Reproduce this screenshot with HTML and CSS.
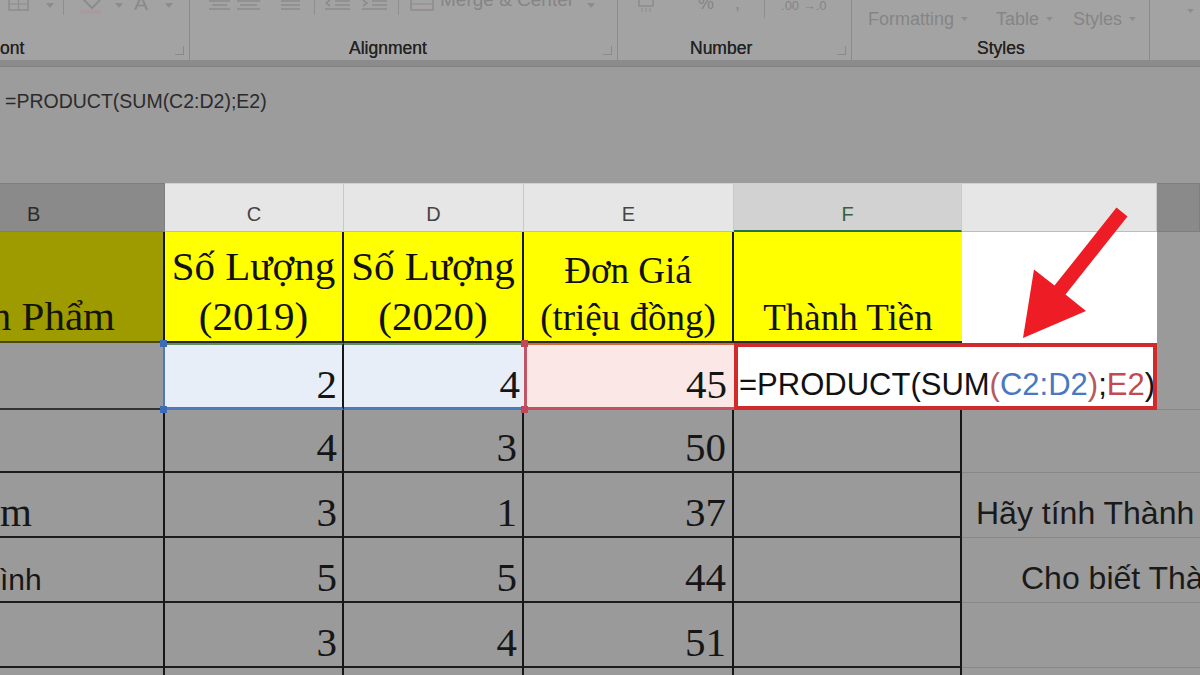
FILE: index.html
```html
<!DOCTYPE html>
<html lang="vi">
<head>
<meta charset="utf-8">
<title>Excel PRODUCT</title>
<link rel="stylesheet" href="styles.css">
</head>
<body>
<div class="ribbon">
  <div class="grp g1">
    <div class="tools">
      <svg class="ico ml8" width="21" height="12" viewBox="0 0 21 12"><rect x="1" y="-4" width="19" height="14" fill="none" stroke="#8c8c8c" stroke-width="1.5"/><line x1="10.5" y1="-4" x2="10.5" y2="10" stroke="#8c8c8c"/><line x1="1" y1="4" x2="20" y2="4" stroke="#8c8c8c"/></svg>
      <svg class="caret ml17" width="8" height="5" viewBox="0 0 8 5"><polygon points="0,0 8,0 4,5" fill="#8c8c8c"/></svg>
      <span class="vsep ml9"></span>
      <svg class="ico ml14" width="25" height="14" viewBox="0 0 25 14"><path d="M4 -2 L14 8 L22 0" fill="none" stroke="#8c8c8c" stroke-width="2"/><rect x="2" y="10" width="21" height="4" fill="#a89aa0"/></svg>
      <svg class="caret ml12" width="8" height="5" viewBox="0 0 8 5"><polygon points="0,0 8,0 4,5" fill="#8c8c8c"/></svg>
      <span class="glyphA ml11">A</span>
      <svg class="caret ml17" width="8" height="5" viewBox="0 0 8 5"><polygon points="0,0 8,0 4,5" fill="#8c8c8c"/></svg>
    </div>
    <div class="foot"><span class="label">ont</span><span class="launch"></span></div>
  </div>
  <div class="grp g2">
    <div class="tools">
      <svg class="ico ml19" width="21" height="12" viewBox="0 0 21 12"><path d="M0 1H21M3 5H18M0 9H21" stroke="#8c8c8c" stroke-width="1.6"/></svg>
      <svg class="ico ml7" width="23" height="12" viewBox="0 0 23 12"><path d="M0 1H23M3 5H20M0 9H23" stroke="#8c8c8c" stroke-width="1.6"/></svg>
      <svg class="ico ml21" width="19" height="12" viewBox="0 0 19 12"><path d="M0 1H19M0 5H19M0 9H19" stroke="#8c8c8c" stroke-width="1.6"/></svg>
      <span class="vsep ml14"></span>
      <svg class="ico ml10" width="25" height="12" viewBox="0 0 25 12"><path d="M10 1H25M10 5H25M0 9H25M5 0L1 3L5 6" fill="none" stroke="#8c8c8c" stroke-width="1.6"/></svg>
      <svg class="ico ml12" width="25" height="12" viewBox="0 0 25 12"><path d="M10 1H25M10 5H25M0 9H25M1 0L5 3L1 6" fill="none" stroke="#8c8c8c" stroke-width="1.6"/></svg>
      <span class="vsep ml11"></span>
      <svg class="ico ml11" width="24" height="12" viewBox="0 0 24 12"><rect x="1" y="-3" width="22" height="13" fill="none" stroke="#8c8c8c" stroke-width="1.5"/><line x1="1" y1="4" x2="23" y2="4" stroke="#8c8c8c"/><rect x="3" y="5" width="18" height="3" fill="#b0a0a6"/></svg>
      <span class="rtxt up ml6">Merge &amp; Center</span>
      <svg class="caret ml13" width="8" height="5" viewBox="0 0 8 5"><polygon points="0,0 8,0 4,5" fill="#8c8c8c"/></svg>
    </div>
    <div class="foot pl159"><span class="label">Alignment</span><span class="launch"></span></div>
  </div>
  <div class="grp g3">
    <div class="tools">
      <svg class="ico ml20" width="16" height="12" viewBox="0 0 16 12"><rect x="1" y="-3" width="14" height="9" fill="none" stroke="#8c8c8c" stroke-width="1.5"/><path d="M4 8V12M8 8V12M12 8V12" stroke="#8c8c8c"/></svg>
      <span class="rtxt up2 ml44">%</span>
      <span class="rtxt up2 ml21">,</span>
      <span class="vsep ml24 tall"></span>
      <span class="rtxt small ml16">.00 →.0</span>
    </div>
    <div class="foot pl72"><span class="label">Number</span><span class="launch"></span></div>
  </div>
  <div class="grp g4">
    <div class="tools">
      <span class="ritem w128 ml16"><span class="rtxt">Formatting</span><svg class="caret" width="7" height="4" viewBox="0 0 8 5"><polygon points="0,0 8,0 4,5" fill="#8c8c8c"/></svg></span>
      <span class="ritem w77"><span class="rtxt">Table</span><svg class="caret" width="7" height="4" viewBox="0 0 8 5"><polygon points="0,0 8,0 4,5" fill="#8c8c8c"/></svg></span>
      <span class="ritem"><span class="rtxt">Styles</span><svg class="caret" width="7" height="4" viewBox="0 0 8 5"><polygon points="0,0 8,0 4,5" fill="#8c8c8c"/></svg></span>
    </div>
    <div class="foot pl125"><span class="label">Styles</span></div>
  </div>
  <div class="grp g5">
    <div class="tools">
      <span class="ritem ml37"><svg class="caret" width="7" height="4" viewBox="0 0 8 5"><polygon points="0,0 8,0 4,5" fill="#8c8c8c"/></svg></span>
    </div>
  </div>
</div>
<div class="band"></div>
<div class="fbar"><span class="ftext">=PRODUCT(SUM(C2:D2);E2)</span></div>

<div class="sheet">
  <!-- header row -->
  <div class="c hd dim hb">B</div>
  <div class="c hd">C</div>
  <div class="c hd">D</div>
  <div class="c hd">E</div>
  <div class="c hd sel">F</div>
  <div class="c hd"></div>
  <div class="c hd dim"></div>

  <!-- row 1 -->
  <div class="c tt olive"><span>n Phẩm</span></div>
  <div class="c tt"><span>Số Lượng</span><span>(2019)</span></div>
  <div class="c tt"><span>Số Lượng</span><span>(2020)</span></div>
  <div class="c tt sm"><span>Đơn Giá</span><span>(triệu đồng)</span></div>
  <div class="c tt sm last"><span>Thành Tiền</span></div>
  <div class="c white"></div>
  <div class="c dimc"></div>

  <!-- row 2 -->
  <div class="c bc selleft"></div>
  <div class="c num c2">2</div>
  <div class="c num d2">4</div>
  <div class="c num e2">45</div>
  <div class="c fx"><span>=PRODUCT(SUM</span><span class="pr">(</span><span class="rb">C2:D2</span><span class="pr">)</span><span>;</span><span class="rr">E2</span><span>)</span></div>
  <div class="c dimc gl"></div>

  <!-- row 3 -->
  <div class="c bc"></div>
  <div class="c num">4</div>
  <div class="c num">3</div>
  <div class="c num ecol">50</div>
  <div class="c num"></div>
  <div class="c gc"></div>

  <!-- row 4 -->
  <div class="c bc serif">m</div>
  <div class="c num">3</div>
  <div class="c num">1</div>
  <div class="c num ecol">37</div>
  <div class="c num"></div>
  <div class="c gc pl14">Hãy tính Thành</div>

  <!-- row 5 -->
  <div class="c bc sans">ình</div>
  <div class="c num">5</div>
  <div class="c num">5</div>
  <div class="c num ecol">44</div>
  <div class="c num"></div>
  <div class="c gc pl59">Cho biết Thàn</div>

  <!-- row 6 -->
  <div class="c bc"></div>
  <div class="c num">3</div>
  <div class="c num">4</div>
  <div class="c num ecol">51</div>
  <div class="c num"></div>
  <div class="c gc"></div>

  <!-- row 7 -->
  <div class="c bc"></div>
  <div class="c num"></div>
  <div class="c num"></div>
  <div class="c num"></div>
  <div class="c num"></div>
  <div class="c gc"></div>
</div>

<svg class="arrow" width="1200" height="675" viewBox="0 0 1200 675">
  <polygon points="1116.5,207.6 1127.5,216.4 1065.5,294.4 1086,311 1023,338 1034,269.5 1054.5,285.6" fill="#ee1c24"/>
</svg>
</body>
</html>
```

FILE: styles.css
```css
* { box-sizing: border-box; margin: 0; padding: 0; }
html, body { width: 1200px; height: 675px; overflow: hidden; }
body {
  background: #9a9a9a;
  font-family: "Liberation Sans", Arial, sans-serif;
  position: relative;
}

/* ---------- ribbon ---------- */
.ribbon { display: flex; height: 60px; background: #a3a3a3; overflow: hidden; }
.grp { display: flex; flex-direction: column; height: 60px; border-right: 1px solid #8b8b8b; }
.g1 { width: 190px; }
.g2 { width: 428px; }
.g3 { width: 234px; }
.g4 { width: 298px; }
.g5 { flex: 1; border-right: none; }
.tools { display: flex; align-items: flex-start; height: 36px; }
.foot { display: flex; align-items: center; justify-content: space-between; height: 24px; padding-right: 5px; }
.label { font-size: 17.5px; color: #232323; text-shadow: 0 0 0.4px #232323; }
.launch { width: 9px; height: 9px; border-right: 1px solid #8a8a8a; border-bottom: 1px solid #8a8a8a; margin-top: 4px; }
.ico { display: block; flex: none; }
.caret { display: block; flex: none; margin-top: 3px; }
.vsep { display: block; width: 1px; height: 15px; background: #8e8e8e; flex: none; }
.vsep.tall { height: 18px; }
.glyphA { font-size: 21px; color: #8a8a8a; margin-top: -9px; line-height: 24px; }
.rtxt { font-size: 18px; color: #858585; line-height: 20px; white-space: nowrap; }
.rtxt.up { font-size: 19px; margin-top: -10px; }
.rtxt.up2 { margin-top: -7px; }
.rtxt.small { font-size: 13px; margin-top: -4px; }
.ritem { display: flex; align-items: center; gap: 7px; margin-top: 9px; flex: none; }
.ritem .caret { margin-top: 0; }
.w128 { width: 128px; }
.w77 { width: 77px; }

.ml6 { margin-left: 6px; } .ml7 { margin-left: 7px; } .ml8 { margin-left: 8px; }
.ml9 { margin-left: 9px; } .ml10 { margin-left: 10px; } .ml11 { margin-left: 11px; }
.ml12 { margin-left: 12px; } .ml13 { margin-left: 13px; } .ml14 { margin-left: 14px; }
.ml16 { margin-left: 16px; } .ml17 { margin-left: 17px; } .ml19 { margin-left: 19px; }
.ml20 { margin-left: 20px; } .ml21 { margin-left: 21px; } .ml24 { margin-left: 24px; }
.ml37 { margin-left: 37px; } .ml44 { margin-left: 44px; }
.pl72 { padding-left: 72px; } .pl125 { padding-left: 125px; } .pl159 { padding-left: 159px; }

/* ---------- formula bar ---------- */
.band { height: 7px; background: #8b8b8b; border-bottom: 1px solid #828282; }
.fbar { height: 116px; background: #9c9c9c; padding: 22px 0 0 5px; }
.ftext { font-size: 19.5px; line-height: 24px; color: #2b2b2b; }

/* ---------- sheet ---------- */
.sheet {
  display: grid;
  grid-template-columns: 165px 179px 180px 210px 228px 195px 43px;
  grid-template-rows: 49px 111px 67px 63px 65px 65px 65px 30px;
}
.c { display: flex; overflow: hidden; white-space: nowrap; min-width: 0; color: #161616; }

.hd {
  align-items: center; justify-content: center;
  font-size: 20px; color: #454545;
  background: #e6e6e6;
  border-right: 1px solid #c9c9c9; border-bottom: 1px solid #bdbdbd;
  border-top: 1px solid #d0d0d0;
  padding-top: 14px;
}
.hd.dim { background: #8a8a8a; color: #2a2a2a; border-color: #7e7e7e; }
.hd.hb { justify-content: flex-start; padding-left: 27px; }
.hd.sel { background: #d2d2d2; border-bottom: 2px solid #217346; color: #36603f; }

.tt {
  flex-direction: column; justify-content: flex-end; align-items: center;
  font-family: "Liberation Serif", "Times New Roman", serif;
  font-size: 41px; line-height: 50px; color: #111;
  background: #ffff00;
  border-right: 2px solid #161616; border-bottom: 2px solid #2a2a2a;
}
.tt.sm { font-size: 37px; line-height: 47px; }
.tt.last { border-right: none; }
.tt.olive { background: #9e9b00; align-items: flex-end; padding-right: 48px; color: #141400; border-bottom-color: #4c4a00; }
.white { background: #ffffff; }
.dimc { background: #9a9a9a; }
.gl { border-bottom: 1px solid #878787; }

.num {
  justify-content: flex-end; align-items: flex-end;
  font-family: "Liberation Serif", "Times New Roman", serif;
  font-size: 41px; line-height: 1;
  padding: 0 5px 3px 0;
  background: #9a9a9a;
  border-right: 2px solid #161616; border-bottom: 2px solid #1c1c1c;
}
.num.ecol { padding-right: 6px; }

.bc {
  background: #9a9a9a; align-items: flex-end;
  border-right: 2px solid #161616; border-bottom: 2px solid #1c1c1c;
}
.bc.serif { font-family: "Liberation Serif", "Times New Roman", serif; font-size: 41px; line-height: 1; padding-bottom: 3px; }
.bc.sans { font-size: 30px; line-height: 1.15; padding-bottom: 4px; }
.bc.selleft { border-right-color: #4f77ba; border-bottom-color: #333; }

.c2, .d2 {
  background: #e8eef8; color: #151515;
  border-top: 2px solid #5e8c63; border-bottom: 3px solid #4f77ba;
  padding-bottom: 2px; position: relative; overflow: visible;
}
.d2 { border-right: none; padding-right: 4px; }
.e2 {
  background: #fce7e7; color: #151515;
  border-left: 3px solid #c25565; border-top: 2px solid #cf6a3a;
  border-bottom: 3px solid #c25060; border-right: none;
  padding-right: 7px; padding-bottom: 2px;
  position: relative; overflow: visible;
}
.c2::before, .c2::after, .e2::before, .e2::after {
  content: ""; position: absolute; width: 7px; height: 7px; left: -5px; z-index: 1;
}
.c2::before, .c2::after { background: #3f6bb5; }
.e2::before, .e2::after { background: #c0485a; left: -6px; }
.c2::before, .e2::before { top: -5px; }
.c2::after, .e2::after { bottom: -6px; }

.fx {
  grid-column: span 2;
  background: #ffffff;
  border: 4px solid #d12a2a;
  align-items: flex-end;
  font-size: 31px; line-height: 1.15; color: #111;
  padding: 0 0 3px 1px;
}
.pr { color: #b45a5f; }
.rb { color: #4a78c0; }
.rr { color: #c24a52; }

.gc {
  grid-column: span 2;
  background: #9a9a9a; align-items: flex-end;
  border-bottom: 1px solid #878787;
  font-size: 32px; line-height: 1.15; color: #1a1a1a;
  padding-bottom: 5px;
}
.pl14 { padding-left: 14px; }
.pl59 { padding-left: 59px; }

/* ---------- annotation ---------- */
.arrow { position: absolute; left: 0; top: 0; pointer-events: none; }
```
